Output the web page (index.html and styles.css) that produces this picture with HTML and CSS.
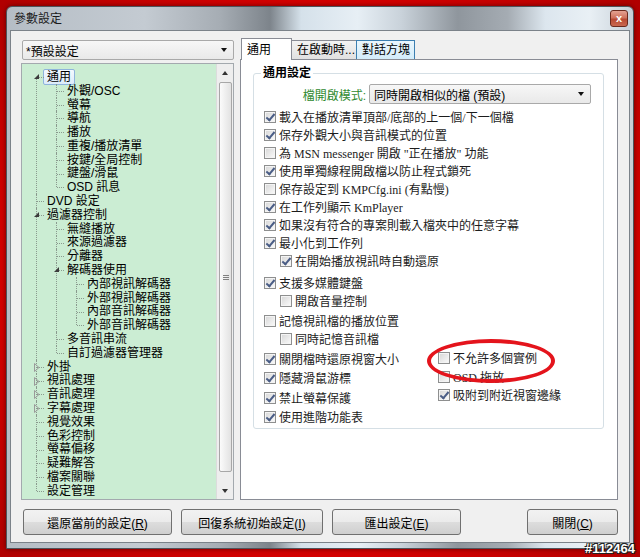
FILE: index.html
```html
<!DOCTYPE html>
<html lang="zh-Hant">
<head>
    <meta charset="UTF-8">
    <meta name="viewport" content="width=device-width, initial-scale=1.0">
    <title>參數設定</title>
    <link rel="stylesheet" href="styles.css">
</head>
<body>
    <div class="window">
        <div class="titlebar">
            <span class="title">參數設定</span>
            <span class="close-btn">x</span>
        </div>
        <div class="client">
            <div class="main">
                <div class="left">
                    <div class="combo preset"><span>*預設設定</span><i class="arrow"></i></div>
                    <div class="tree">
                        <ul class="tree-list">
                            <li>
                                <svg class="exp" width="7" height="7"><path d="M6 1 L6 6 L1 6 Z" fill="#3c3c3c"/></svg>
                                <span class="row"><span class="label sel">通用</span></span>
                                <ul>
                                    <li><span class="row"><span class="label">外觀/OSC</span></span></li>
                                    <li><span class="row"><span class="label">螢幕</span></span></li>
                                    <li><span class="row"><span class="label">導航</span></span></li>
                                    <li><span class="row"><span class="label">播放</span></span></li>
                                    <li><span class="row"><span class="label">重複/播放清單</span></span></li>
                                    <li><span class="row"><span class="label">按鍵/全局控制</span></span></li>
                                    <li><span class="row"><span class="label">鍵盤/滑鼠</span></span></li>
                                    <li><span class="row"><span class="label">OSD 訊息</span></span></li>
                                </ul>
                            </li>
                            <li><span class="row"><span class="label">DVD 設定</span></span></li>
                            <li>
                                <svg class="exp" width="7" height="7"><path d="M6 1 L6 6 L1 6 Z" fill="#3c3c3c"/></svg>
                                <span class="row"><span class="label">過濾器控制</span></span>
                                <ul>
                                    <li><span class="row"><span class="label">無縫播放</span></span></li>
                                    <li><span class="row"><span class="label">來源過濾器</span></span></li>
                                    <li><span class="row"><span class="label">分離器</span></span></li>
                                    <li>
                                        <svg class="exp" width="7" height="7"><path d="M6 1 L6 6 L1 6 Z" fill="#3c3c3c"/></svg>
                                        <span class="row"><span class="label">解碼器使用</span></span>
                                        <ul>
                                            <li><span class="row"><span class="label">內部視訊解碼器</span></span></li>
                                            <li><span class="row"><span class="label">外部視訊解碼器</span></span></li>
                                            <li><span class="row"><span class="label">內部音訊解碼器</span></span></li>
                                            <li><span class="row"><span class="label">外部音訊解碼器</span></span></li>
                                        </ul>
                                    </li>
                                    <li><span class="row"><span class="label">多音訊串流</span></span></li>
                                    <li><span class="row"><span class="label">自訂過濾器管理器</span></span></li>
                                </ul>
                            </li>
                            <li>
                                <svg class="exp closed" width="6" height="9"><path d="M0.5 0.5 L5 4.5 L0.5 8.5 Z" fill="none" stroke="#9a9a9a"/></svg>
                                <span class="row"><span class="label">外掛</span></span>
                            </li>
                            <li>
                                <svg class="exp closed" width="6" height="9"><path d="M0.5 0.5 L5 4.5 L0.5 8.5 Z" fill="none" stroke="#9a9a9a"/></svg>
                                <span class="row"><span class="label">視訊處理</span></span>
                            </li>
                            <li>
                                <svg class="exp closed" width="6" height="9"><path d="M0.5 0.5 L5 4.5 L0.5 8.5 Z" fill="none" stroke="#9a9a9a"/></svg>
                                <span class="row"><span class="label">音訊處理</span></span>
                            </li>
                            <li>
                                <svg class="exp closed" width="6" height="9"><path d="M0.5 0.5 L5 4.5 L0.5 8.5 Z" fill="none" stroke="#9a9a9a"/></svg>
                                <span class="row"><span class="label">字幕處理</span></span>
                            </li>
                            <li><span class="row"><span class="label">視覺效果</span></span></li>
                            <li><span class="row"><span class="label">色彩控制</span></span></li>
                            <li><span class="row"><span class="label">螢幕偏移</span></span></li>
                            <li><span class="row"><span class="label">疑難解答</span></span></li>
                            <li><span class="row"><span class="label">檔案關聯</span></span></li>
                            <li><span class="row"><span class="label">設定管理</span></span></li>
                        </ul>
                        <div class="vscroll">
                            <div class="sb-btn"><i class="up"></i></div>
                            <div class="sb-track"><div class="thumb"><i class="grip"></i></div></div>
                            <div class="sb-btn"><i class="down"></i></div>
                        </div>
                    </div>
                </div>

                <div class="right">
                    <div class="tabs">
                        <div class="tab active">通用</div>
                        <div class="tab t2">在啟動時...</div>
                        <div class="tab t3 hover">對話方塊</div>
                    </div>
                    <div class="panel">
                        <div class="group">
                            <div class="legend">通用設定</div>
                            <div class="mode-row">
                                <label>檔開啟模式:</label>
                                <div class="combo mode"><span>同時開啟相似的檔 (預設)</span><i class="arrow"></i></div>
                            </div>
                            <div class="checks">
                                <div class="section">
                                    <div class="check"><i class="box on"></i>載入在播放清單頂部/底部的上一個/下一個檔</div>
                                    <div class="check"><i class="box on"></i>保存外觀大小與音訊模式的位置</div>
                                    <div class="check"><i class="box"></i>為 MSN messenger 開啟 "正在播放" 功能</div>
                                    <div class="check"><i class="box on"></i>使用單獨線程開啟檔以防止程式鎖死</div>
                                    <div class="check"><i class="box"></i>保存設定到 KMPCfg.ini (有點慢)</div>
                                    <div class="check"><i class="box on"></i>在工作列顯示 KmPlayer</div>
                                    <div class="check"><i class="box on"></i>如果沒有符合的專案則載入檔夾中的任意字幕</div>
                                    <div class="check"><i class="box on"></i>最小化到工作列</div>
                                    <div class="check sub"><i class="box on"></i>在開始播放視訊時自動還原</div>
                                </div>
                                <div class="section gap4">
                                    <div class="check"><i class="box on"></i>支援多媒體鍵盤</div>
                                    <div class="check sub"><i class="box"></i>開啟音量控制</div>
                                </div>
                                <div class="section gap2">
                                    <div class="check"><i class="box"></i>記憶視訊檔的播放位置</div>
                                    <div class="check sub"><i class="box"></i>同時記憶音訊檔</div>
                                </div>
                                <div class="cols">
                                    <div class="col-left">
                                        <div class="check"><i class="box on"></i>關閉檔時還原視窗大小</div>
                                        <div class="check"><i class="box on"></i>隱藏滑鼠游標</div>
                                        <div class="check"><i class="box on"></i>禁止螢幕保護</div>
                                        <div class="check"><i class="box on"></i>使用進階功能表</div>
                                    </div>
                                    <div class="col-right">
                                        <div class="check"><i class="box"></i>不允許多個實例</div>
                                        <div class="check"><i class="box"></i>OSD 拖放</div>
                                        <div class="check"><i class="box on"></i>吸附到附近視窗邊緣</div>
                                    </div>
                                </div>
                            </div>
                        </div>
                    </div>
                </div>
            </div>

            <div class="buttons">
                <button class="b-restore">還原當前的設定(<u>R</u>)</button>
                <button class="b-reset">回復系統初始設定(<u>I</u>)</button>
                <button class="b-export">匯出設定(<u>E</u>)</button>
                <button class="b-close">關閉(<u>C</u>)</button>
            </div>
        </div>
    </div>

    <!-- 紅圈標註 -->
    <div class="mark-ring"></div>
    <div class="watermark">#112464</div>
</body>
</html>
```

FILE: styles.css
```css
html, body {
    margin: 0;
    padding: 0;
}
body {
    width: 640px;
    height: 557px;
    overflow: hidden;
    position: relative;
    background: radial-gradient(ellipse at center, #e00000 60%, #b00000 100%);
    font-family: "Liberation Sans", "Noto Sans CJK TC", sans-serif;
    font-size: 12px;
    color: #000;
}
ul {
    list-style: none;
    margin: 0;
    padding: 0;
}

/* window frame */
.window {
    box-sizing: border-box;
    width: 628px;
    height: 543px;
    margin: 6px;
    padding: 0 5px 6px 3px;
    border: 1px solid #4e555c;
    border-radius: 6px 6px 0 0;
    box-shadow: 0 0 5px rgba(60, 0, 0, 0.7);
    background: linear-gradient(90deg, #b5bdc5 0%, #c4cbd2 22%, #a6adb4 34%, #7d848b 42%, #d5e1ea 47%, #e7eff5 56%, #c9d2da 63%, #8f969d 72%, #a5acb3 80%, #dce6ee 86%, #e9f0f5 93%, #c7d0d8 100%);
}
.titlebar {
    height: 23px;
    display: flex;
    align-items: flex-start;
    justify-content: space-between;
}
.title {
    margin: 4px 0 0 4px;
    line-height: 16px;
    color: #1a1a1a;
}
.close-btn {
    box-sizing: border-box;
    width: 18px;
    height: 17px;
    margin: 3px 0 0 0;
    border: 1px solid #6b2a1e;
    border-radius: 3px;
    background: linear-gradient(#e4a292 0%, #d0735e 45%, #b84a33 55%, #c96850 100%);
    color: #fff;
    font-weight: bold;
    font-size: 11px;
    line-height: 14px;
    text-align: center;
}
.client {
    box-sizing: border-box;
    width: 620px;
    height: 513px;
    border: 1px solid #7b8289;
    background: #f0f0f0;
    padding: 9px 11px 0 10px;
}
.main {
    display: flex;
    gap: 6px;
    height: 460px;
}

/* left column */
.left {
    width: 213px;
    display: flex;
    flex-direction: column;
}
.combo {
    box-sizing: border-box;
    height: 20px;
    border: 1px solid #a9a9a9;
    border-radius: 2px;
    background: linear-gradient(#f7f7f7, #e9e9e9);
    display: flex;
    align-items: center;
    justify-content: space-between;
    padding: 0 6px 0 3px;
}
.combo.preset {
    margin-left: 1px;
}
.arrow {
    width: 0;
    height: 0;
    border-left: 3.5px solid transparent;
    border-right: 3.5px solid transparent;
    border-top: 4px solid #111;
}
.tree {
    box-sizing: border-box;
    margin-top: 3px;
    height: 437px;
    border: 1px solid #a3a9ae;
    background: #cbedd3;
    display: flex;
}
.tree-list {
    flex: 1;
    padding-top: 6px;
}
.tree-list li {
    position: relative;
}
.tree-list ul {
    padding-left: 20px;
}
.tree-list li::before {
    content: "";
    position: absolute;
    left: 14px;
    top: 0;
    bottom: 0;
    border-left: 1px dotted #8a9a8e;
}
.tree-list li:last-child::before {
    bottom: auto;
    height: 7px;
}
.tree-list > li:first-child::before {
    top: 8px;
}
.tree-list li::after {
    content: "";
    position: absolute;
    left: 15px;
    top: 7px;
    width: 7px;
    border-top: 1px dotted #8a9a8e;
}
.exp {
    position: absolute;
    left: 11px;
    top: 3px;
    z-index: 1;
}
.exp.closed {
    left: 12px;
    top: 3px;
}
.row {
    display: flex;
    align-items: center;
    height: 13.8px;
    padding-left: 22px;
}
.label {
    display: inline-block;
    padding: 0 2px;
    line-height: 12px;
    border: 1px solid transparent;
    white-space: nowrap;
}
.label.sel {
    padding: 1px 3px;
    border-color: #8fb4dc;
    border-radius: 2px;
    background: linear-gradient(#f4f9fe, #dcebfa);
    margin-left: -1px;
}
.vscroll {
    width: 16px;
    background: #eeeeee;
    border-left: 1px solid #dcdcdc;
    display: flex;
    flex-direction: column;
}
.sb-btn {
    height: 17px;
    display: flex;
    align-items: center;
    justify-content: center;
}
.up, .down {
    width: 0;
    height: 0;
    border-left: 3px solid transparent;
    border-right: 3px solid transparent;
}
.up {
    border-bottom: 4px solid #333;
}
.down {
    border-top: 4px solid #333;
}
.sb-track {
    flex: 1;
    padding: 1px 1px 0 2px;
}
.thumb {
    box-sizing: border-box;
    height: 390px;
    border: 1px solid #a7a7a7;
    border-radius: 2px;
    background: linear-gradient(90deg, #fbfbfb, #e2e2e2);
    display: flex;
    align-items: center;
    justify-content: center;
}
.grip {
    width: 6px;
    height: 1px;
    margin-top: -4px;
    background: #808080;
    box-shadow: 0 2px #808080, 0 4px #808080;
}

/* right column */
.right {
    width: 378px;
    display: flex;
    flex-direction: column;
}
.tabs {
    display: flex;
    align-items: flex-end;
    height: 19px;
    padding-left: 1px;
}
.tab {
    box-sizing: border-box;
    height: 19px;
    border: 1px solid #898c95;
    border-bottom: none;
    background: linear-gradient(#f3f3f3, #e1e1e1);
    padding: 0 5px;
    line-height: 19px;
    white-space: nowrap;
    margin-right: -1px;
}
.tab.active {
    width: 51px;
    height: 22px;
    margin-bottom: -1px;
    padding-top: 2px;
    background: #fff;
    position: relative;
    z-index: 1;
}
.tab.t2 {
    width: 66px;
}
.tab.t3 {
    width: 59px;
}
.tab.hover {
    border-color: #3c7fb1;
    border-bottom: none;
    background: linear-gradient(#eaf6fd, #d3ecfa);
    position: relative;
}
.panel {
    box-sizing: border-box;
    height: 441px;
    border: 1px solid #898c95;
    background: #fff;
    padding-top: 13px;
}
.group {
    box-sizing: border-box;
    margin: 0 13px 0 12px;
    height: 356px;
    border: 1px solid #d5dfe5;
    border-radius: 3px;
}
.legend {
    display: table;
    margin: -8px 0 0 7px;
    padding: 0 2px;
    background: #fff;
    font-weight: bold;
    line-height: 14px;
}
.mode-row {
    display: flex;
    align-items: center;
    gap: 3px;
    margin-top: 4px;
}
.mode-row label {
    width: 112px;
    text-align: right;
    color: #2f8a2f;
}
.combo.mode {
    width: 222px;
    padding-left: 4px;
}
.checks {
    margin-top: 4px;
    padding-left: 10px;
    font-family: "Liberation Serif", "Noto Sans CJK TC", serif;
    color: #1c1c1c;
}
.section.gap4 {
    margin-top: 4px;
}
.section.gap2 {
    margin-top: 2px;
}
.check {
    display: flex;
    align-items: center;
    height: 18px;
    white-space: nowrap;
}
.check.sub {
    padding-left: 16px;
}
.box {
    box-sizing: border-box;
    position: relative;
    width: 12px;
    height: 12px;
    margin-right: 3px;
    border: 1px solid #8e8f8f;
    background: linear-gradient(135deg, #d6d6d6, #fbfbfb);
    box-shadow: inset 0 0 0 1px #f4f4f4;
}
.box.on::after {
    content: "";
    position: absolute;
    left: 3px;
    top: 0;
    width: 3px;
    height: 7px;
    border: solid #4a5d86;
    border-width: 0 2px 2px 0;
    transform: rotate(40deg);
}
.cols {
    display: flex;
    margin-top: 1px;
}
.col-left {
    width: 174px;
}
.col-left .check {
    height: 19.5px;
}
.col-right .check {
    height: 18.5px;
}

/* bottom buttons */
.buttons {
    display: flex;
    gap: 9px;
    margin-top: 9px;
    padding-left: 2px;
}
.buttons button {
    height: 26px;
    border: 1px solid #707070;
    border-radius: 3px;
    background: linear-gradient(#f2f2f2 0%, #ebebeb 50%, #dddddd 51%, #cfcfcf 100%);
    font-family: "Liberation Sans", "Noto Sans CJK TC", sans-serif;
    font-size: 12px;
    color: #000;
    padding: 0;
}
.b-restore {
    width: 149px;
}
.b-reset {
    width: 142px;
}
.b-export {
    width: 129px;
}
.b-close {
    width: 91px;
    margin-left: auto;
}

/* annotation overlays */
.mark-ring {
    position: absolute;
    left: 427px;
    top: 339px;
    width: 128px;
    height: 44px;
    box-sizing: border-box;
    border: 4px solid #e4141c;
    border-radius: 50%;
}
.watermark {
    position: absolute;
    right: 5px;
    bottom: 1px;
    color: #fff;
    font-weight: bold;
    font-size: 13px;
    text-shadow: -1px -1px 0 #222, 1px -1px 0 #222, -1px 1px 0 #222, 1px 1px 0 #222;
}
```
